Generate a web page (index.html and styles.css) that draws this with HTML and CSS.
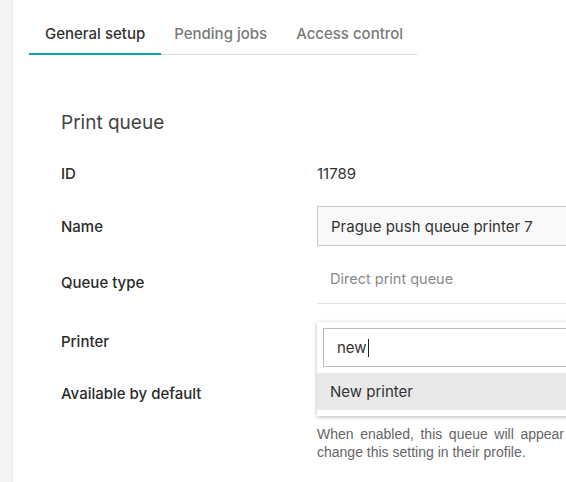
FILE: index.html
```html
<!DOCTYPE html>
<html lang="en">
<head>
    <meta charset="UTF-8">
    <title>Print queue</title>
    <link rel="stylesheet" href="styles.css">
</head>
<body>
<div class="layout">
    <aside class="sidebar"></aside>
    <main class="content">
        <ul class="tabs">
            <li class="current"><a href="#">General setup</a></li>
            <li><a href="#">Pending jobs</a></li>
            <li><a href="#">Access control</a></li>
        </ul>

        <section class="queue">
            <h2>Print queue</h2>

            <div class="row row-id">
                <label>ID</label>
                <div class="value">11789</div>
            </div>

            <div class="row row-name">
                <label>Name</label>
                <div class="value">
                    <input class="text" type="text" value="Prague push queue printer 7">
                </div>
            </div>

            <div class="row row-type">
                <label>Queue type</label>
                <div class="value">
                    <div class="static">Direct print queue</div>
                </div>
            </div>

            <div class="row row-printer">
                <label>Printer</label>
                <div class="value">
                    <div class="select"></div>
                    <!-- open dropdown with search -->
                    <div class="dropdown">
                        <div class="search"><span>new</span><i class="caret"></i></div>
                        <ul class="options">
                            <li class="hover">New printer</li>
                        </ul>
                    </div>
                </div>
            </div>

            <div class="row row-default">
                <label>Available by default</label>
                <div class="value">
                    <span class="toggle"></span>
                </div>
            </div>

            <div class="row row-help">
                <span></span>
                <p class="help">When enabled, this queue will appear change this setting in their profile.</p>
            </div>
        </section>
    </main>
</div>
</body>
</html>
```

FILE: styles.css
```css
* {
    margin: 0;
    padding: 0;
    box-sizing: border-box;
}

ul {
    list-style: none
}

html, body {
    height: 100%;
    overflow: hidden;
    background: #fff;
}

body {
    font-family: Inter, "Noto Sans", sans-serif;
    color: #333;
}

.layout {
    display: flex;
    height: 100%;
}

.sidebar {
    width: 13px;
    flex: none;
    background-color: #f3f4f6;
    border-right: 1px solid #e6e8eb;
}

.content {
    padding-left: 16px;
    flex: none;
}

/* tabs */
.tabs {
    display: flex;
    width: 388px;
    margin-top: 14px;
    border-bottom: 1px solid #dcdcdc;
}

.tabs li {
    flex: none;
    margin-bottom: -1px;
    border-bottom: 2px solid transparent;
}

.tabs li.current {
    border-bottom-color: #149db3;
}

.tabs a {
    display: block;
    height: 39px;
    line-height: 39px;
    padding: 0 16px;
    font-size: 15px;
    font-weight: 500;
    color: #7a7a7a;
    text-decoration: none;
    white-space: nowrap;
}

.tabs li:nth-child(2) a {
    padding: 0 13px;
}

.tabs li.current a {
    color: #333;
}

/* form */
.queue {
    padding-left: 32px;
}

.queue h2 {
    margin-top: 56px;
    font-size: 19px;
    line-height: 24px;
    font-weight: 400;
    color: #444;
}

.row {
    display: grid;
    grid-template-columns: 256px 430px;
    align-items: center;
}

.row label {
    font-size: 15px;
    font-weight: 500;
    color: #2b2b2b;
}

.value {
    font-size: 15px;
    position: relative;
}

.row-id {
    height: 40px;
    margin-top: 18px;
}

.row-name {
    margin-top: 13px;
}

.text {
    width: 100%;
    height: 40px;
    padding: 0 13px;
    border: 1px solid #c9c9c9;
    background: #f9f9f9;
    font-family: inherit;
    font-size: 15px;
    color: #333;
    outline: none;
}

.row-type {
    margin-top: 10px;
}

.row-type label {
    margin-top: 4px;
}

.static {
    height: 48px;
    line-height: 46px;
    padding-left: 13px;
    font-size: 14.5px;
    color: #8a8a8a;
    border-bottom: 1px solid #e0e0e0;
}

.row-printer {
    margin-top: 18px;
}

.select {
    height: 38px;
    border: 1px solid #c9c9c9;
}

.dropdown {
    position: absolute;
    top: 0;
    left: 0;
    right: 0;
    z-index: 2;
    padding: 6px 0 6px 6px;
    background: #fff;
    box-shadow: 0 1px 4px rgba(0, 0, 0, 0.3);
}

.search {
    display: flex;
    align-items: center;
    height: 39px;
    padding-left: 13px;
    border: 1px solid #bdbdbd;
    font-size: 15px;
    color: #333;
}

.caret {
    width: 1px;
    height: 18px;
    background: #222;
    margin-left: 1px;
}

.options {
    margin: 6px 0 0 -6px;
}

.options li {
    height: 37px;
    line-height: 37px;
    padding-left: 13px;
    font-size: 15px;
    color: #333;
}

.options li.hover {
    background: #e9e9e9;
}

.row-default {
    height: 38px;
    margin-top: 14px;
}

.toggle {
    display: block;
    width: 40px;
    height: 22px;
    border: 2px solid #f1d34a;
    border-radius: 11px;
}

.row-help {
    grid-template-columns: 256px 247px;
    margin-top: 13px;
}

.help {
    font-family: "Liberation Sans", Arial, sans-serif;
    font-size: 14px;
    line-height: 18px;
    color: #666;
    text-align: justify;
}
```
